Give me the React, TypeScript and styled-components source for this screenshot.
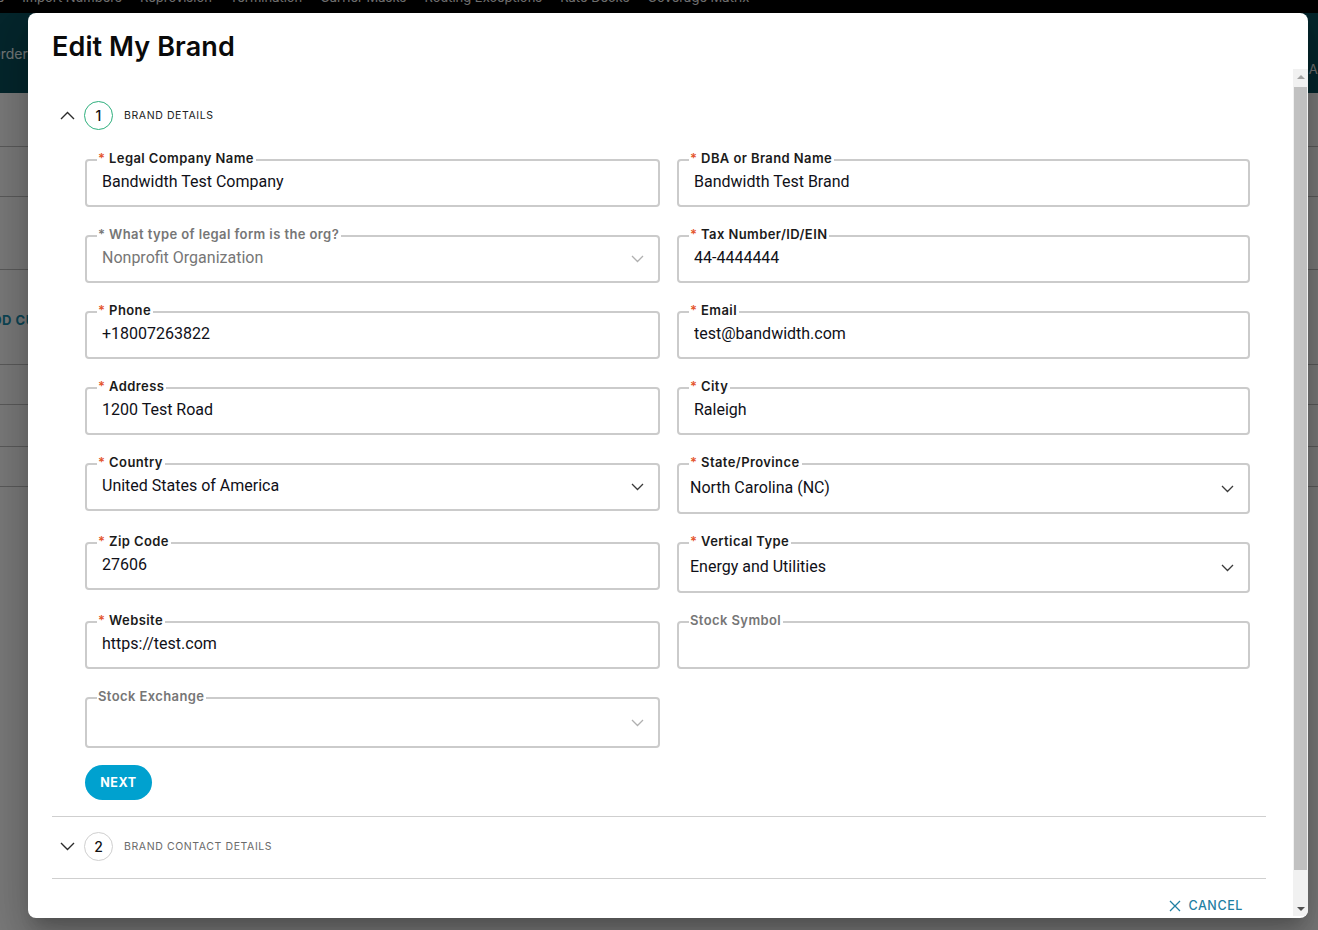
import React from 'react';
import styled, {createGlobalStyle} from 'styled-components';

const GlobalStyle = createGlobalStyle`
	html, body {
		margin: 0;
		padding: 0;
	}
	body {
		font-family: Inter, "Noto Sans", sans-serif;
		overflow: hidden;
	}
	* {
		box-sizing: border-box;
	}
`;

/* page behind the dialog */

const Page = styled.div`
	position: relative;
	width: 1318px;
	height: 930px;
	overflow: hidden;
	display: flex;
	flex-direction: column;
	background: #f3f3f3;
`;

const NavBar = styled.div`
	height: 13px;
	flex: none;
	background: #000;
	display: flex;
	gap: 18px;
	overflow: hidden;
`;

const NavItem = styled.span`
	font-size: 13px;
	line-height: 13px;
	margin-top: -9px;
	color: #e8e8e8;
	white-space: nowrap;
`;

const TopHeader = styled.div`
	height: 80px;
	flex: none;
	background: #0b4c58;
	display: flex;
	justify-content: space-between;
	align-items: center;
`;

const HeaderLink = styled.span`
	font-size: 14px;
	color: #e4eef0;
	margin-left: -10px;
`;

const HeaderRight = styled.span`
	align-self: flex-end;
	margin-bottom: 16px;
	margin-right: -13px;
	font-size: 13px;
	color: #e0e0e0;
	letter-spacing: 0.5px;
`;

const Table = styled.div`
	display: flex;
	flex-direction: column;
`;

const TableRow = styled.div<{$h: number}>`
	height: ${({$h}) => $h}px;
	border-bottom: 1px solid #b4b4b4;
	display: flex;
	align-items: center;
`;

const RowButton = styled.span`
	margin-left: -18px;
	padding-top: 5px;
	font-size: 13px;
	font-weight: 700;
	color: #1a8aa8;
	letter-spacing: 0.5px;
	white-space: nowrap;
`;

const Backdrop = styled.div`
	position: absolute;
	inset: 0;
	background: rgba(0, 0, 0, 0.5);
`;

/* dialog */

const Modal = styled.div`
	position: absolute;
	left: 28px;
	top: 13px;
	width: 1280px;
	height: 905px;
	background: #fff;
	border-radius: 8px;
	display: flex;
	flex-direction: column;
	overflow: hidden;
	box-shadow: 0 11px 15px -7px rgba(0, 0, 0, 0.2),
		0 24px 38px 3px rgba(0, 0, 0, 0.14), 0 9px 46px 8px rgba(0, 0, 0, 0.12);
`;

const ModalHeader = styled.div`
	flex: none;
	padding: 17px 24px 5px 24px;
`;

const Title = styled.h1`
	margin: 0;
	font-size: 27px;
	line-height: 34px;
	font-weight: 600;
	color: #0a0a0a;
	letter-spacing: 0.1px;
`;

const ModalMain = styled.div`
	flex: 1;
	min-height: 0;
	display: flex;
	padding-bottom: 2px;
`;

const Body = styled.div`
	flex: 1;
	min-width: 0;
	overflow: hidden;
	padding: 31px 27px 0 24px;
`;

const Scrollbar = styled.div`
	width: 15px;
	flex: none;
	background: #f1f1f1;
	display: flex;
	flex-direction: column;
	align-items: center;
`;

const ScrollArrow = styled.span<{$down?: boolean}>`
	height: 15px;
	width: 15px;
	flex: none;
	display: flex;
	align-items: center;
	justify-content: center;
	&::before {
		content: '';
		border-left: 4px solid transparent;
		border-right: 4px solid transparent;
		${({$down}) =>
			$down ? 'border-top: 4px solid #505050;' : 'border-bottom: 4px solid #a3a3a3;'}
	}
`;

const ScrollThumb = styled.span`
	width: 13px;
	height: 783px;
	margin-top: 3px;
	background: #c1c1c1;
`;

const ScrollSpace = styled.span`
	flex: 1;
`;

const StepHeader = styled.div`
	height: 30px;
	display: flex;
	align-items: center;
`;

const Toggle = styled.span`
	width: 32px;
	display: flex;
	justify-content: center;
	padding-right: 1px;
`;

const StepNumber = styled.span<{$active?: boolean}>`
	width: 29px;
	height: 29px;
	border-radius: 50%;
	border: 1.5px solid ${({$active}) => ($active ? '#2eaf7d' : '#cfcfcf')};
	display: flex;
	align-items: center;
	justify-content: center;
	font-size: 14px;
	font-weight: 500;
	color: #111;
`;

const StepLabel = styled.span<{$active?: boolean}>`
	margin-left: 11px;
	font-size: 10.5px;
	letter-spacing: 0.6px;
	color: ${({$active}) => ($active ? '#222' : '#6a6a6a')};
	text-transform: uppercase;
`;

const StepContent = styled.div`
	padding: 21.5px 16px 16px 33px;
`;

const Grid = styled.div`
	display: grid;
	grid-template-columns: 575px 1fr;
	column-gap: 17px;
	row-gap: 21px;
	align-items: start;
`;

const Field = styled.fieldset`
	margin: 0;
	min-width: 0;
	border: 2px solid #cbcbcb;
	border-radius: 4px;
	padding: 0 14px 10px 10px;
`;

const Legend = styled.legend<{$muted?: boolean}>`
	padding: 0 2px 4px 1px;
	font-size: 13px;
	line-height: 13px;
	font-weight: 600;
	letter-spacing: 0.4px;
	color: ${({$muted}) => ($muted ? '#767676' : '#1b1b1b')};
	white-space: nowrap;
`;

const Star = styled.span<{$muted?: boolean}>`
	color: ${({$muted}) => ($muted ? '#767676' : '#e4552c')};
`;

const ValueRow = styled.div<{$tall?: boolean}>`
	height: ${({$tall}) => ($tall ? 29 : 26)}px;
	display: flex;
	align-items: center;
	padding-left: ${({$tall}) => ($tall ? 1 : 5)}px;
`;

const valueFont = `
	font-family: Roboto, "Liberation Sans", sans-serif;
	font-size: 16px;
	letter-spacing: 0;
`;

const Input = styled.input`
	flex: 1;
	min-width: 0;
	border: none;
	outline: none;
	background: transparent;
	padding: 0;
	${valueFont}
	color: #101018;
`;

const SelectValue = styled.span<{$muted?: boolean}>`
	flex: 1;
	${valueFont}
	color: ${({$muted}) => ($muted ? '#767676' : '#101018')};
	white-space: nowrap;
`;

const Chevron = styled.svg<{$muted?: boolean}>`
	flex: none;
	width: 13px;
	height: 8px;
	margin-top: 3px;
	color: ${({$muted}) => ($muted ? '#b0b0b0' : '#3a3a3a')};
`;

const NextButton = styled.button`
	margin-top: 17px;
	height: 35px;
	width: 67px;
	border: none;
	border-radius: 18px;
	background: #00a1cf;
	color: #fff;
	font-family: inherit;
	font-size: 12.5px;
	font-weight: 700;
	letter-spacing: 0.6px;
	cursor: pointer;
	padding: 0;
`;

const Divider = styled.hr`
	margin: 0;
	border: none;
	border-top: 1px solid #cfcfcf;
`;

const CollapsedStep = styled.div`
	padding: 15px 0 16px 0;
`;

const Footer = styled.div`
	display: flex;
	justify-content: flex-end;
	padding: 18px 23px 40px 0;
`;

const CancelButton = styled.button`
	display: flex;
	align-items: center;
	gap: 7px;
	border: none;
	background: none;
	padding: 0;
	height: 18px;
	font-family: inherit;
	font-size: 12.5px;
	font-weight: 500;
	letter-spacing: 0.6px;
	color: #1f7fa3;
	cursor: pointer;
`;

type FieldDef = {
	label: string;
	value: string;
	required?: boolean;
	select?: boolean;
	disabled?: boolean;
	tall?: boolean;
	mutedLabel?: boolean;
	mutedChevron?: boolean;
};

const fields: FieldDef[] = [
	{label: 'Legal Company Name', value: 'Bandwidth Test Company', required: true},
	{label: 'DBA or Brand Name', value: 'Bandwidth Test Brand', required: true},
	{
		label: 'What type of legal form is the org?',
		value: 'Nonprofit Organization',
		required: true,
		select: true,
		disabled: true,
		mutedChevron: true,
	},
	{label: 'Tax Number/ID/EIN', value: '44-4444444', required: true},
	{label: 'Phone', value: '+18007263822', required: true},
	{label: 'Email', value: 'test@bandwidth.com', required: true},
	{label: 'Address', value: '1200 Test Road', required: true},
	{label: 'City', value: 'Raleigh', required: true},
	{label: 'Country', value: 'United States of America', required: true, select: true},
	{label: 'State/Province', value: 'North Carolina (NC)', required: true, select: true, tall: true},
	{label: 'Zip Code', value: '27606', required: true},
	{label: 'Vertical Type', value: 'Energy and Utilities', required: true, select: true, tall: true},
	{label: 'Website', value: 'https://test.com', required: true},
	{label: 'Stock Symbol', value: '', mutedLabel: true},
	{
		label: 'Stock Exchange',
		value: '',
		select: true,
		tall: true,
		mutedLabel: true,
		mutedChevron: true,
	},
];

const navItems = [
	'Numbers',
	'Import Numbers',
	'Reprovision',
	'Termination',
	'Carrier Masks',
	'Routing Exceptions',
	'Rate Decks',
	'Coverage Matrix',
];

const rowHeights = [54, 50, 73, 95, 40, 42, 40];

function ChevronDown({muted}: {muted?: boolean}) {
	return (
		<Chevron $muted={muted} viewBox="0 0 13 8">
			<polyline
				points="1,1 6.5,6.5 12,1"
				fill="none"
				stroke="currentColor"
				strokeWidth="1.3"
			/>
		</Chevron>
	);
}

function StepToggle({up}: {up?: boolean}) {
	return (
		<Toggle>
			<svg width="15" height="9" viewBox="0 0 15 9">
				<polyline
					points={up ? '1,8 7.5,1.5 14,8' : '1,1 7.5,7.5 14,1'}
					fill="none"
					stroke="#2b2b2b"
					strokeWidth="1.4"
				/>
			</svg>
		</Toggle>
	);
}

function FormField({f}: {f: FieldDef}) {
	const muted = f.disabled || f.mutedLabel;
	return (
		<Field>
			<Legend $muted={muted}>
				{f.required && <Star $muted={f.disabled}>* </Star>}
				{f.label}
			</Legend>
			<ValueRow $tall={f.tall}>
				{f.select ? (
					<>
						<SelectValue $muted={f.disabled}>{f.value}</SelectValue>
						<ChevronDown muted={f.mutedChevron} />
					</>
				) : (
					<Input readOnly value={f.value} />
				)}
			</ValueRow>
		</Field>
	);
}

export default function App() {
	return (
		<>
			<GlobalStyle />
			<Page>
				<NavBar>
					{navItems.map((n, i) => (
						<NavItem key={n} style={i === 0 ? {marginLeft: -52} : undefined}>
							{n}
						</NavItem>
					))}
				</NavBar>
				<TopHeader>
					<HeaderLink>Orders</HeaderLink>
					<HeaderRight>AIR</HeaderRight>
				</TopHeader>
				<Table>
					{rowHeights.map((h, i) => (
						<TableRow key={i} $h={h}>
							{i === 3 && <RowButton>ADD CUSTOMER</RowButton>}
						</TableRow>
					))}
				</Table>
				<Backdrop />
				<Modal>
					<ModalHeader>
						<Title>Edit My Brand</Title>
					</ModalHeader>
					<ModalMain>
						<Body>
							<section>
								<StepHeader>
									<StepToggle up />
									<StepNumber $active>1</StepNumber>
									<StepLabel $active>Brand Details</StepLabel>
								</StepHeader>
								<StepContent>
									<Grid>
										{fields.map((f) => (
											<FormField key={f.label} f={f} />
										))}
									</Grid>
									<NextButton>NEXT</NextButton>
								</StepContent>
							</section>
							<Divider />
							<CollapsedStep>
								<StepHeader>
									<StepToggle />
									<StepNumber>2</StepNumber>
									<StepLabel>Brand Contact Details</StepLabel>
								</StepHeader>
							</CollapsedStep>
							<Divider />
							<Footer>
								<CancelButton>
									<svg width="12" height="12" viewBox="0 0 12 12">
										<path
											d="M1 1 L11 11 M11 1 L1 11"
											stroke="currentColor"
											strokeWidth="1.3"
											fill="none"
										/>
									</svg>
									CANCEL
								</CancelButton>
							</Footer>
						</Body>
						<Scrollbar>
							<ScrollArrow />
							<ScrollThumb />
							<ScrollSpace />
							<ScrollArrow $down />
						</Scrollbar>
					</ModalMain>
				</Modal>
			</Page>
		</>
	);
}
